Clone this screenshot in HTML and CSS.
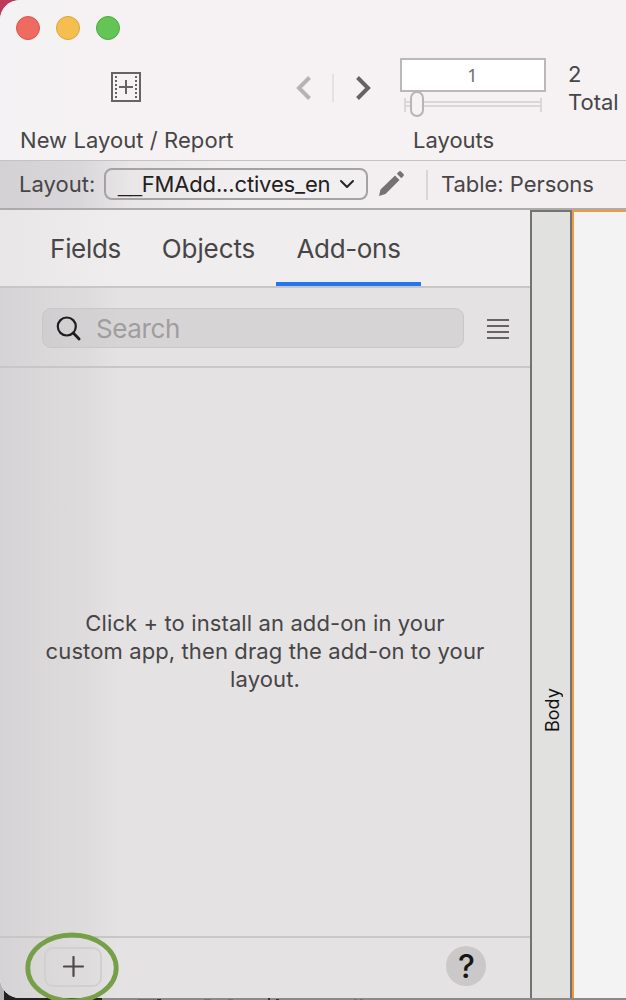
FILE: index.html
```html
<!DOCTYPE html>
<html lang="en">
<head>
<meta charset="utf-8">
<title>Layout mode</title>
<link rel="stylesheet" href="styles.css">
</head>
<body>
<div class="desktop">
<div class="window">
  <header class="toolbar">
    <div class="lights"><i class="light red"></i><i class="light yellow"></i><i class="light green"></i></div>
    <div class="tools">
      <div class="new-layout">
        <svg class="new-icon" width="30" height="30" viewBox="0 0 30 30" fill="none" stroke="#676265" stroke-width="2"><path d="M1 1h28v28H1zM8 15h14M15 8v14"/><path d="M5 4v22M25 4v22" stroke-dasharray="2 2"/></svg>
        <span class="label t-new">New Layout / Report</span>
      </div>
      <div class="nav">
        <svg width="16" height="26" viewBox="0 0 16 26" fill="none" stroke="#b7b3b4" stroke-width="4"><path d="M13.500 2.500 3 13l10.500 10.500"/></svg>
        <i class="nav-line"></i>
        <svg width="16" height="26" viewBox="0 0 16 26" fill="none" stroke="#676264" stroke-width="4"><path d="M1.500 2.500 12 13 1.500 23.500"/></svg>
      </div>
      <div class="layouts">
        <div class="number">1</div>
        <svg class="slider" width="146" height="26" viewBox="0 0 146 26" fill="none" stroke="#dbd7d8" stroke-width="2"><path d="M5 7v14M141 7v14M5 11h136M5 15h136"/><rect x="11" y="1" width="12" height="24" rx="6" fill="#f6f2f3" stroke="#b8b4b5"/></svg>
        <span class="label t-layouts">Layouts</span>
      </div>
      <div class="total"><div>2</div><div class="t-total">Total</div></div>
    </div>
  </header>
  <div class="layout-bar">
    <span class="t-layout">Layout:</span>
    <div class="select"><span class="t-select"><span class="lead">__</span>FMAdd...ctives_en</span><svg width="16" height="10" viewBox="0 0 16 10" fill="none" stroke="#262425" stroke-width="2" stroke-linecap="round" stroke-linejoin="round"><path d="m2 2 6 6 6-6"/></svg></div>
    <svg class="pencil" width="28" height="28" viewBox="0 0 28 28" fill="#767173"><path d="M1 27 2.500 20.500 17 6.500 21.500 11 7.500 25zM18.800 4.800 21 2.500Q22 1.500 23 2.500L25.500 5Q26.300 6 25.500 7L23.300 9.200z"/></svg>
    <i class="bar-line"></i>
    <span class="t-table">Table: Persons</span>
  </div>
  <div class="workspace">
    <aside class="panel">
      <nav class="tabs"><div class="tab fields"><span>Fields</span></div><div class="tab objects"><span>Objects</span></div><div class="tab addons"><span>Add-ons</span></div></nav>
      <div class="search-row">
        <div class="search"><svg width="28" height="28" viewBox="0 0 28 28" fill="none" stroke="#1f1d1e" stroke-width="2.200" stroke-linecap="round"><circle cx="11.800" cy="12.500" r="9"/><path d="m18.300 19 5.800 6" stroke-width="2.800"/></svg><span>Search</span></div>
        <svg class="list" width="22" height="20" viewBox="0 0 22 20" stroke="#676264" stroke-width="2"><path d="M0 1h22M0 7h22M0 13h22M0 19h22"/></svg>
      </div>
      <div class="empty"><p>Click + to install an add-on in your<br>custom app, then drag the add-on to your<br>layout.</p></div>
      <footer class="footer">
        <div class="add"><svg width="22" height="22" viewBox="0 0 22 22" stroke="#4d494b" stroke-width="2.200" stroke-linecap="round"><path d="M1 10.500h19M10.500 1v19"/></svg></div>
        <div class="help">?</div>
      </footer>
    </aside>
    <div class="part"><span>Body</span></div>
    <div class="canvas"></div>
  </div>
</div>
<svg class="behind" width="626" height="2" viewBox="0 0 626 2"><path fill="#222021" d="M4 0h98v2H4z"/><path fill="#8b8989" d="M102 0h524v2H102z"/><path fill="#343233" d="M157 1h4v1h-4zM268 0h2v2h-2zM276 1h3v1h-3z"/><path fill="#737172" d="M138 1h18v1h-18zM204 1h7v1h-7zM228 1h5v1h-5zM354 1h3v1h-3zM360 1h3v1h-3z"/></svg>
<svg class="ring" width="96" height="72" viewBox="0 0 96 72" fill="none" stroke="#76a047" stroke-width="4.800"><ellipse cx="48" cy="36" rx="44.200" ry="33"/></svg>
</div>
</body>
</html>
```
FILE: styles.css
```css
* { box-sizing: border-box; }
body { margin: 0; font-family: Inter, "Liberation Sans", sans-serif; color: #474546; font-size: 22px; overflow: hidden; }
svg { display: block; flex: none; }
span { white-space: nowrap; }
.desktop { position: relative; width: 626px; height: 1000px; overflow: hidden; background: linear-gradient(#bd3b58 0 50%, transparent 50%), linear-gradient(90deg, #b4b2b3 4px, #222021 4px); }
.window { height: 998px; border-radius: 20px 0 0 20px; overflow: hidden; display: flex; flex-direction: column; background: #f6f2f3; }
.toolbar { height: 161px; border-bottom: 1px solid #c6c2c4; background: linear-gradient(90deg, #f4f2f4, #f6f2f3 110px); }
.lights { display: flex; gap: 16px; padding: 16px 0 0 16px; height: 58px; }
.light { width: 24px; height: 24px; border-radius: 50%; border: 1px solid; }
.red { background: #ed6b60; border-color: #d6574c; }
.yellow { background: #f5bf50; border-color: #dba33c; }
.green { background: #62c555; border-color: #4faa3e; }
.tools { display: flex; }
.label { line-height: 28px; }
.new-layout { width: 234px; padding: 14px 0 0 20px; }
.new-icon { margin: 0 0 24px 91px; }
.t-new { letter-spacing: .06px; }
.nav { display: flex; align-items: center; width: 166px; height: 28px; margin-top: 16px; padding-left: 62px; }
.nav-line { width: 2px; height: 28px; background: #e5e1e2; margin: 0 22px 0 20px; }
.layouts { width: 168px; }
.number { width: 146px; height: 34px; border: 2px solid #bbb8b9; background: #fff; font: 18px/31px "Noto Sans", sans-serif; color: #716e6f; text-align: center; padding-right: 1px; }
.slider { margin-top: -1px; }
.t-layouts { display: block; margin: 9px 0 0 13px; }
.total { line-height: 28px; padding-top: 2px; }
.layout-bar { height: 49px; border-bottom: 2px solid #aeabac; display: flex; align-items: center; padding-left: 19px; background: linear-gradient(90deg, #d3d1d3, #d9d7d9 80px, #e9e6e8 130px, #f2eff0 240px, #f3eff0); }
.t-layout { width: 85px; margin-top: -2px; letter-spacing: .05px; }
.select { width: 264px; height: 32px; border: 2px solid #a5a2a3; border-radius: 8px; display: flex; align-items: center; padding-left: 12px; color: #222021; margin-top: -1px; }
.t-select { width: 221px; letter-spacing: -.15px; }
.lead { font-family: "Liberation Sans", sans-serif; letter-spacing: -.4px; line-height: 20px; }
.pencil { margin: -3px 0 0 10px; }
.bar-line { width: 2px; height: 30px; background: #d9d5d6; margin: 0 13px 0 20px; }
.t-table { margin-top: -2px; letter-spacing: -.05px; }
.workspace { height: 788px; display: flex; }
.panel { width: 530px; display: flex; flex-direction: column; background: linear-gradient(90deg, #d5d3d5, #dad8d9 45px, #dfdcde 90px, #e5e2e3 118px); }
.tabs { height: 78px; border-bottom: 2px solid #c9c6c7; display: flex; padding-left: 30px; background: linear-gradient(90deg, #e8e6e7, #efedee 120px); font-size: 26px; letter-spacing: -.33px; }
.tab { height: 76px; line-height: 78px; text-align: center; white-space: nowrap; }
.fields { width: 111px; }
.objects { width: 135px; letter-spacing: -.1px; }
.addons { width: 145px; border-bottom: 4px solid #2476ea; }
.search-row { height: 80px; border-bottom: 2px solid #c9c6c7; display: flex; align-items: center; padding-left: 42px; padding-top: 1px; }
.search { width: 422px; height: 40px; border: 1px solid #c9c7c8; border-radius: 9px; background: rgba(197,195,197,.45); display: flex; align-items: center; font-size: 26px; letter-spacing: -.4px; color: #a09d9e; padding-left: 12px; gap: 13px; }
.search span { padding-top: 2px; }
.list { margin: 2px 0 0 23px; }
.empty { flex: 1; padding-top: 241px; text-align: center; line-height: 28px; letter-spacing: .11px; }
.empty p { margin: 0; }
.footer { height: 62px; border-top: 2px solid #c9c6c7; display: flex; align-items: center; padding: 0 44px; justify-content: space-between; }
.add { width: 58px; height: 40px; border: 2px solid #d1cfd0; border-radius: 9px; display: flex; align-items: center; justify-content: center; margin-bottom: 2px; padding-left: 1px; }
.help { width: 40px; height: 40px; border-radius: 50%; background: #cbc8c9; color: #171516; text-align: center; font-size: 32px; font-weight: 450; line-height: 42px; margin-bottom: 4px; padding-left: 1px; }
.part { width: 42px; border: 2px solid #747273; border-bottom: 0; background: #e1e1df; display: flex; justify-content: center; padding-top: 474px; }
.part span { writing-mode: vertical-rl; transform: rotate(180deg); color: #111; font-size: 18px; height: 46px; line-height: 32px; margin-left: 4px; }
.canvas { flex: 1; border: 2px solid #ee9a3b; border-right: 0; border-bottom: 0; background: #f3f3f3; }
.ring { position: absolute; left: 24px; top: 932px; }
```
